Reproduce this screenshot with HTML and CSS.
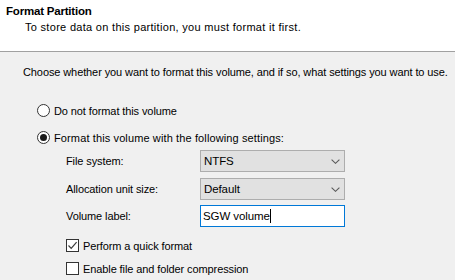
FILE: index.html
```html
<!DOCTYPE html>
<html>
<head>
<meta charset="utf-8">
<link rel="stylesheet" href="styles.css">
</head>
<body>
<div class="window">
  <div class="header">
    <div class="title">Format Partition</div>
    <div class="subtitle">To store data on this partition, you must format it first.</div>
  </div>
  <div class="content">
    <div class="intro">Choose whether you want to format this volume, and if so, what settings you want to use.</div>
    <div class="radio-row first">
      <span class="radio"></span>
      <span class="label">Do not format this volume</span>
    </div>
    <div class="radio-row second">
      <span class="radio checked"><span class="dot"></span></span>
      <span class="label wide">Format this volume with the following settings:</span>
    </div>
    <div class="settings">
      <div class="field">
        <span class="field-label">File system:</span>
        <div class="select">
          <span>NTFS</span>
          <svg class="chev" width="9" height="5" viewBox="0 0 9 5"><path d="M0.6 0.6 L4.5 4.3 L8.4 0.6" fill="none" stroke="#5a5a5a" stroke-width="1.1"/></svg>
        </div>
      </div>
      <div class="field">
        <span class="field-label">Allocation unit size:</span>
        <div class="select">
          <span>Default</span>
          <svg class="chev" width="9" height="5" viewBox="0 0 9 5"><path d="M0.6 0.6 L4.5 4.3 L8.4 0.6" fill="none" stroke="#5a5a5a" stroke-width="1.1"/></svg>
        </div>
      </div>
      <div class="field">
        <span class="field-label">Volume label:</span>
        <div class="input"><span>SGW volume</span><span class="caret"></span></div>
      </div>
      <div class="check-row first">
        <span class="checkbox">
          <svg width="11" height="11" viewBox="0 0 11 11"><path d="M1.5 5.5 L4.2 8.3 L9.6 2.2" fill="none" stroke="#3c3c3c" stroke-width="1.2"/></svg>
        </span>
        <span class="label">Perform a quick format</span>
      </div>
      <div class="check-row second">
        <span class="checkbox"></span>
        <span class="label">Enable file and folder compression</span>
      </div>
    </div>
  </div>
</div>
</body>
</html>
```
FILE: styles.css
```css
html, body {
  margin: 0;
  padding: 0;
}
body {
  width: 455px;
  height: 280px;
  overflow: hidden;
  font-family: "Liberation Sans", Arial, sans-serif;
  font-size: 11px;
  letter-spacing: -0.1px;
  color: #000;
  background: #f0f0f0;
}
.window {
  display: flex;
  flex-direction: column;
  height: 280px;
}
.header {
  background: #fff;
  height: 52px;
  box-sizing: border-box;
  border-bottom: 1px solid #a0a0a0;
  padding: 4px 0 0 6px;
}
.title {
  font-weight: bold;
  line-height: 15px;
  font-size: 11.5px;
  letter-spacing: -0.2px;
}
.subtitle {
  margin-top: 1px;
  padding-left: 19px;
  line-height: 15px;
  letter-spacing: 0.3px;
}
.content {
  flex: 1;
  background: #f0f0f0;
  padding-left: 23px;
}
.intro {
  margin-top: 13px;
  line-height: 15px;
  white-space: nowrap;
}
.radio-row {
  display: flex;
  align-items: center;
  gap: 4px;
  padding-left: 14px;
  height: 15px;
}
.radio-row.first {
  margin-top: 23px;
}
.radio-row.second {
  margin-top: 12px;
}
.label.wide {
  letter-spacing: 0.12px;
}
.radio {
  width: 11px;
  height: 11px;
  border: 1px solid #333;
  border-radius: 50%;
  background: #fff;
  display: flex;
  align-items: center;
  justify-content: center;
  flex: none;
}
.dot {
  width: 7px;
  height: 7px;
  border-radius: 50%;
  background: #1a1a1a;
}
.settings {
  padding-left: 43px;
  margin-top: 5px;
  display: flex;
  flex-direction: column;
}
.field {
  display: flex;
  align-items: center;
  height: 22px;
  margin-bottom: 6px;
}
.field:nth-child(2) {
  margin-bottom: 5px;
}
.field-label {
  width: 134px;
  flex: none;
}
.select {
  width: 145px;
  height: 22px;
  box-sizing: border-box;
  background: #e1e1e1;
  border: 1px solid #adadad;
  display: flex;
  align-items: center;
  justify-content: space-between;
  padding: 0 4px 0 3px;
  font-size: 11.5px;
}
.chev {
  display: block;
}
.input {
  width: 145px;
  height: 22px;
  box-sizing: border-box;
  background: #fff;
  border: 1px solid #0078d7;
  display: flex;
  align-items: center;
  padding-left: 2px;
  font-size: 11.5px;
}
.caret {
  width: 1px;
  height: 14px;
  background: #000;
}
.check-row {
  display: flex;
  align-items: center;
  gap: 4px;
  height: 15px;
}
.check-row.first {
  margin-top: 5px;
}
.check-row.second {
  margin-top: 8px;
}
.checkbox {
  width: 11px;
  height: 11px;
  border: 1px solid #333;
  background: #fff;
  flex: none;
  display: flex;
  align-items: center;
  justify-content: center;
}
.checkbox svg {
  display: block;
}
```
